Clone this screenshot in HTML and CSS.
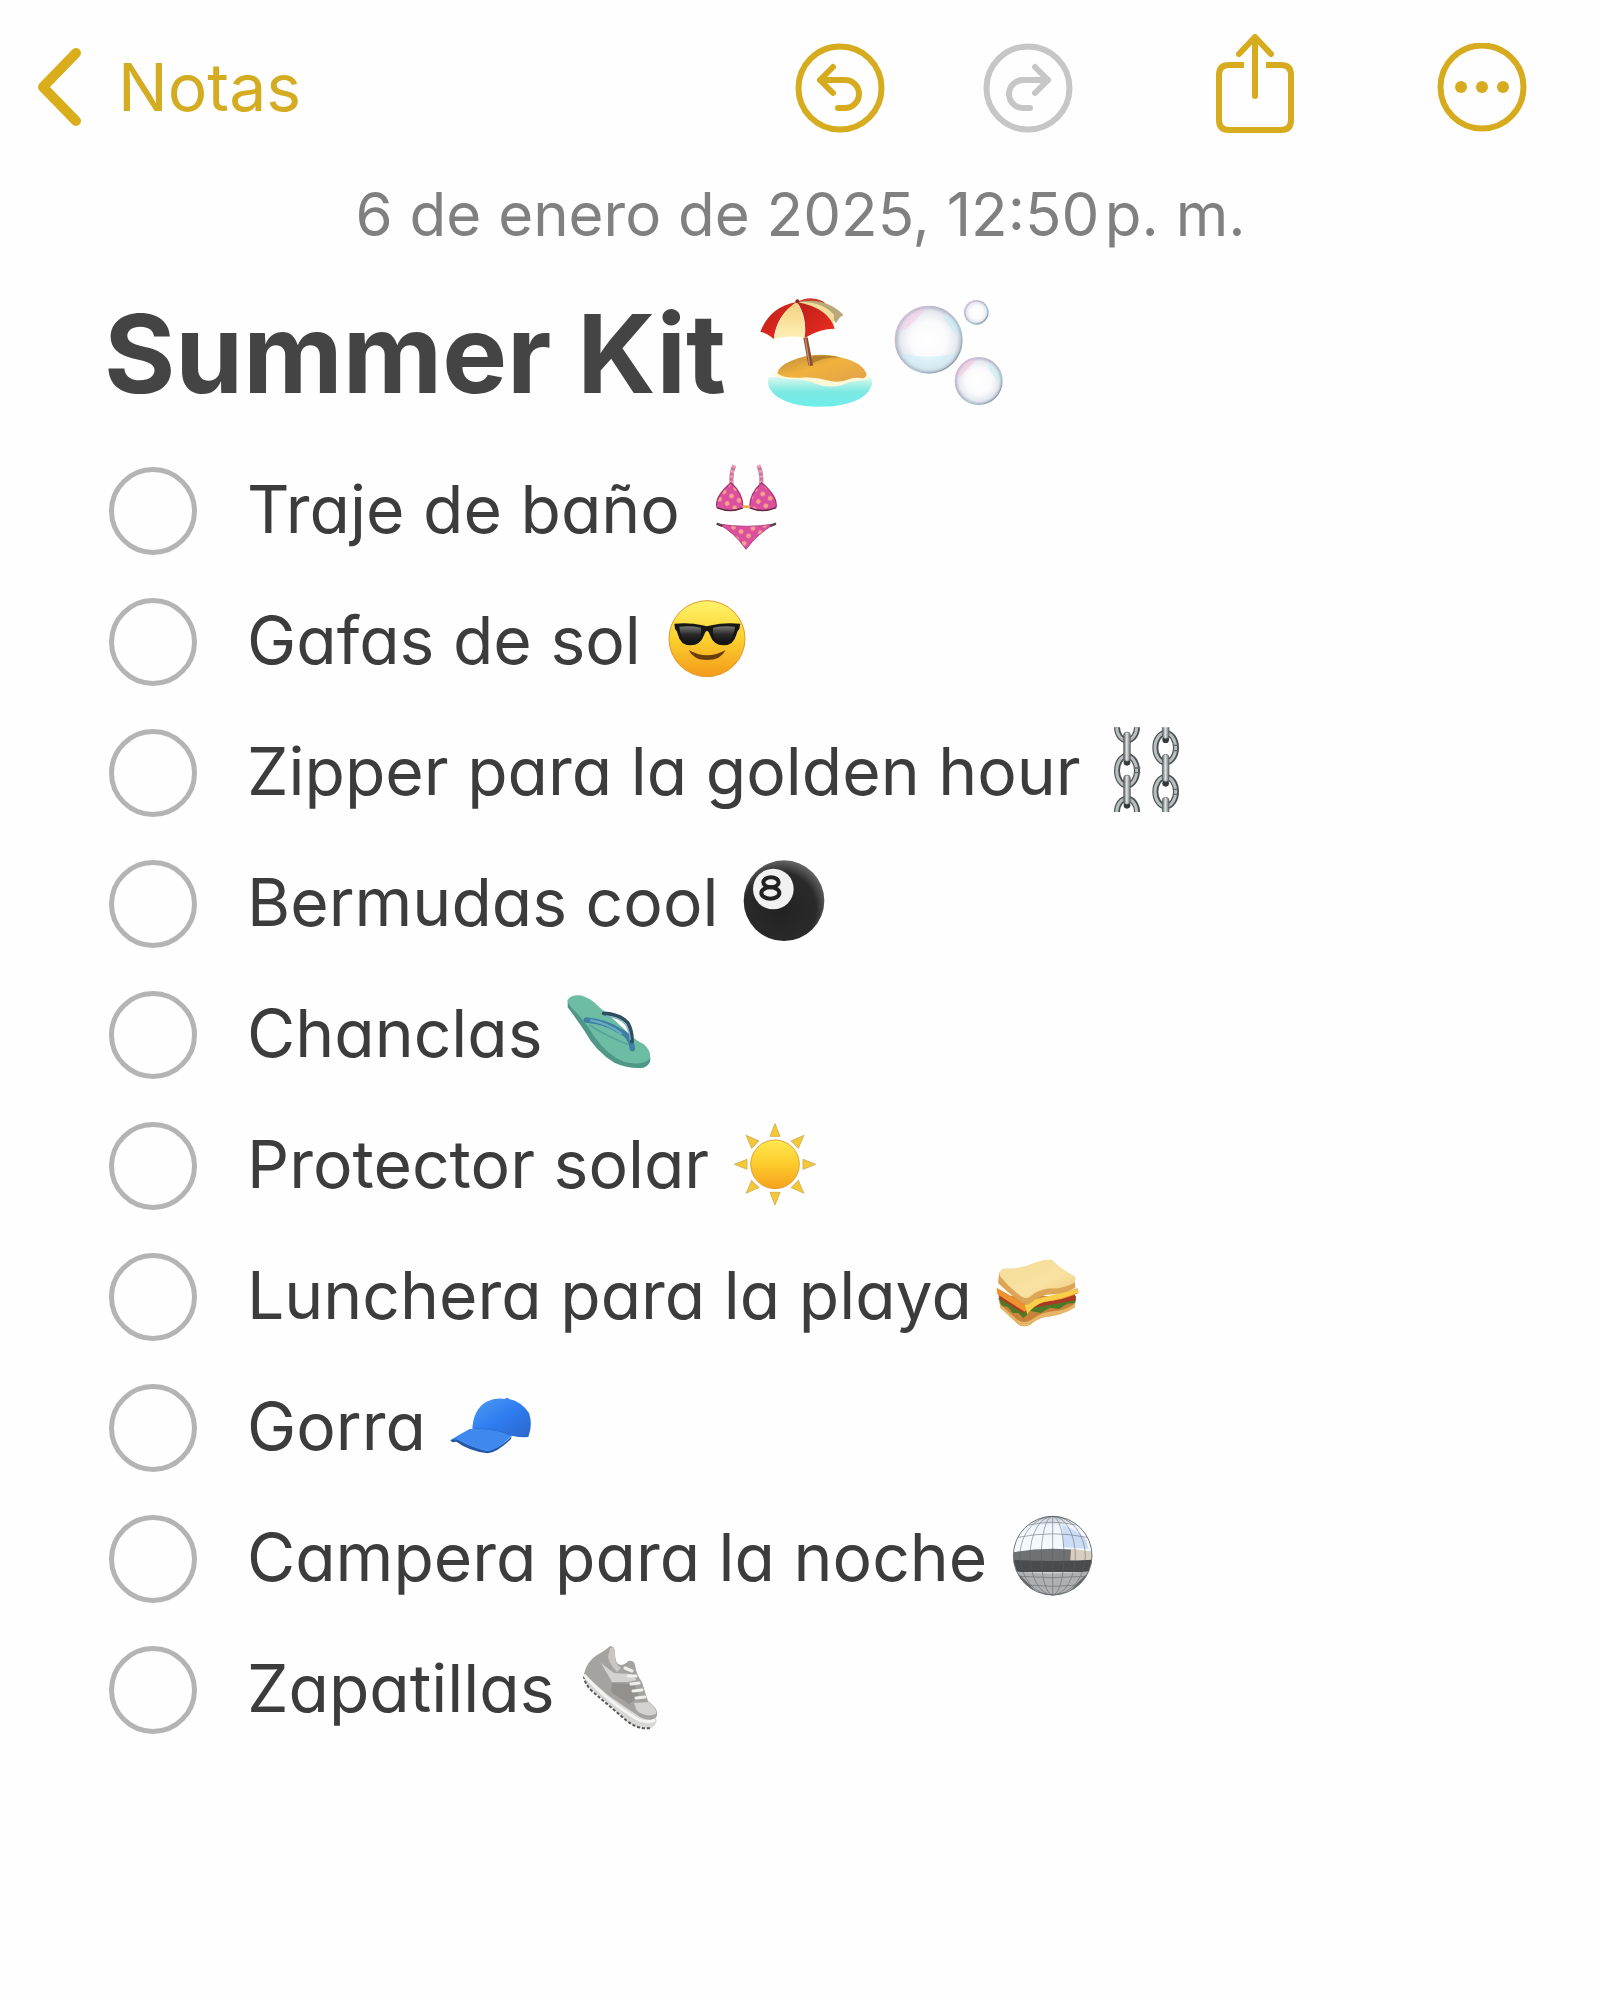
FILE: index.html
```html
<!DOCTYPE html>
<html lang="es">
<head>
    <meta charset="UTF-8">
    <meta name="viewport" content="width=device-width, initial-scale=1.0">
    <title>Summer Kit</title>
    <link rel="stylesheet" href="styles.css">
</head>
<body>
    <header class="toolbar">
        <a class="back" href="#">
            <svg class="chevron" viewBox="0 0 46 80"><path d="M40 6 L7 40 L40 74"/></svg>
            Notas
        </a>
        <div class="actions">
            <div class="history">
                <button type="button" class="icon-button" aria-label="Deshacer">
                    <svg width="90" height="90" viewBox="0 0 90 90">
                        <circle cx="45" cy="45" r="41.5"/>
                        <path d="M38 24 L25 37 L38 50 M25 37 H50 A14 14 0 0 1 50 65 H43"/>
                    </svg>
                </button>
                <button type="button" class="icon-button" aria-label="Rehacer" disabled>
                    <svg width="90" height="90" viewBox="0 0 90 90">
                        <circle cx="45" cy="45" r="41.5"/>
                        <path d="M52 24 L65 37 L52 50 M65 37 H40 A14 14 0 0 0 40 65 H47"/>
                    </svg>
                </button>
            </div>
            <button type="button" class="icon-button" aria-label="Compartir">
                <svg width="78" height="99" viewBox="0 0 78 99">
                    <path stroke-linecap="butt" d="M28 31 H13 Q3 31 3 41 V86 Q3 96 13 96 H65 Q75 96 75 86 V41 Q75 31 65 31 H50"/>
                    <path d="M39 62 V4 M23 20 L39 3 L55 20"/>
                </svg>
            </button>
            <button type="button" class="icon-button" aria-label="Más">
                <svg width="90" height="90" viewBox="0 0 90 90">
                    <circle cx="45" cy="44" r="41.5"/>
                    <g class="dots"><circle cx="24" cy="44" r="6"/><circle cx="45" cy="44" r="6"/><circle cx="66" cy="44" r="6"/></g>
                </svg>
            </button>
        </div>
    </header>

    <main class="note">
        <p class="date">6 de enero de 2025, 12:50&hairsp;p. m.</p>
        <h1 class="title">
            Summer Kit
            <!-- beach with umbrella -->
            <svg class="emoji" viewBox="50 48 342 342">
                <defs>
                    <linearGradient id="sea" x1="0" y1="0" x2="0" y2="1"><stop offset="0" stop-color="#d8f8ee"/><stop offset=".5" stop-color="#7be9e2"/><stop offset="1" stop-color="#6eeeea"/></linearGradient>
                    <linearGradient id="sand" x1="0" y1="0" x2="1" y2="1"><stop offset="0" stop-color="#b98a3e"/><stop offset=".45" stop-color="#f0b23c"/><stop offset="1" stop-color="#e2a24a"/></linearGradient>
                    <linearGradient id="cream" x1="0" y1="0" x2="0" y2="1"><stop offset="0" stop-color="#f3d27e"/><stop offset="1" stop-color="#fff0b8"/></linearGradient>
                    <linearGradient id="red" x1="0" y1="0" x2="1" y2="1"><stop offset="0" stop-color="#b92018"/><stop offset="1" stop-color="#f02c22"/></linearGradient>
                </defs>
                <path fill="url(#sea)" d="M82 292 Q72 325 110 352 Q155 382 235 380 Q320 380 365 350 Q402 322 388 292 Z"/>
                <path fill="#fdf8d8" d="M88 280 Q105 296 150 298 Q200 298 225 312 Q262 326 305 314 Q335 300 380 300 Q388 290 370 276 Z"/>
                <path fill="url(#sand)" d="M108 280 Q112 258 150 242 Q205 218 265 226 Q345 238 368 268 Q384 290 366 295 Q345 290 325 297 Q300 308 270 304 Q235 294 195 292 Q130 298 108 280 Z"/>
                <path fill="#87591c" opacity=".5" d="M205 256 Q240 230 300 232 Q260 224 215 228 Z"/>
                <path fill="#8b4b30" d="M186 174 L199 172 L215 256 Q208 260 201 256 Z"/>
                <path fill="#c89068" d="M190 176 L194 175 L207 257 L203 257 Z"/>
                <path fill="#c93a2c" d="M167 66 Q205 44 245 64 L262 80 Z"/>
                <path fill="#b9a878" d="M170 66 Q255 50 307 106 Q296 108 284 130 Q262 90 170 66 Z"/>
                <path fill="#f4dc9a" d="M170 66 Q240 62 278 104 L276 138 Q246 90 170 66 Z"/>
                <path fill="url(#red)" d="M167 66 Q85 80 57 156 Q78 158 97 178 Q105 105 167 66 Z"/>
                <path fill="url(#cream)" d="M167 66 Q110 100 97 178 Q145 164 190 174 Q195 110 167 66 Z"/>
                <path fill="url(#red)" d="M167 66 Q198 110 190 174 Q235 146 280 146 Q262 84 167 66 Z"/>
                <circle cx="168" cy="64" r="6" fill="#8c2a1c"/>
            </svg>
            <!-- bubbles -->
            <svg class="emoji" viewBox="447 48 342 342">
                <defs>
                    <radialGradient id="film"><stop offset="0" stop-color="#fff"/><stop offset=".55" stop-color="#fbfbfd"/><stop offset=".85" stop-color="#e6e9ef"/><stop offset="1" stop-color="#b4bac8"/></radialGradient>
                    <linearGradient id="rim" x1="0" y1="0" x2="1" y2="1"><stop offset="0" stop-color="#ecbfe2"/><stop offset=".4" stop-color="#b6b4cb"/><stop offset=".65" stop-color="#a5cbd6"/><stop offset="1" stop-color="#7c8191"/></linearGradient>
                </defs>
                <g fill="url(#film)" stroke="url(#rim)" stroke-width="4">
                    <circle cx="557" cy="179" r="100"/>
                    <circle cx="707" cy="303" r="70"/>
                    <circle cx="700" cy="97" r="35"/>
                </g>
                <path fill="#f5cfea" opacity=".6" d="M468 152 Q490 92 550 86 Q520 120 490 146 Z"/>
                <path fill="#c3edf5" opacity=".5" d="M470 220 Q555 240 640 218 Q618 270 558 273 Q495 268 470 220 Z M610 100 Q650 130 650 175 Q625 150 600 112 Z"/>
                <path fill="#f7c6dc" opacity=".6" d="M645 280 Q662 240 700 238 Q680 262 650 292 Z"/>
                <path fill="#c6f0f2" opacity=".6" d="M745 250 Q774 280 770 315 Q755 290 735 262 Z"/>
            </svg>
        </h1>

        <ul class="checklist">
            <li class="item">
                <input type="checkbox" id="traje">
                <label for="traje">Traje de baño</label>
                <svg class="emoji" viewBox="183 48 252 252">
                    <defs>
                        <pattern id="dots" width="26" height="26" patternUnits="userSpaceOnUse" patternTransform="rotate(30)"><rect width="26" height="26" fill="#dc4f9f"/><circle cx="13" cy="13" r="7" fill="#f8a48c"/></pattern>
                    </defs>
                    <path fill="none" stroke="#c27896" stroke-width="12" d="M274 46 Q262 70 266 104 M346 46 Q358 70 354 104"/>
                    <path fill="none" stroke="#f0a0bc" stroke-width="12" stroke-dasharray="7 9" d="M274 46 Q262 70 266 104 M346 46 Q358 70 354 104"/>
                    <path fill="url(#dots)" stroke="#a53672" stroke-width="4" d="M264 98 Q300 130 300 172 Q262 190 222 172 Q214 140 264 98 Z M356 98 Q320 130 320 172 Q358 190 399 172 Q405 140 356 98 Z"/>
                    <path fill="none" stroke="#5d2941" stroke-width="4" d="M223 174 Q262 190 300 174 M320 174 Q358 190 398 174"/>
                    <path stroke="#eeaa58" stroke-width="8" d="M298 170 H322"/>
                    <path fill="url(#dots)" stroke="#b5427f" stroke-width="3" d="M226 222 Q310 236 394 222 Q345 250 309 298 Q272 245 226 222 Z"/>
                    <path stroke="#4d4247" stroke-width="7" d="M221 221 L238 228 M399 221 L382 228"/>
                </svg>
            </li>
            <li class="item">
                <input type="checkbox" id="gafas">
                <label for="gafas">Gafas de sol</label>
                <svg class="emoji" viewBox="72 441 252 252">
                    <defs>
                        <linearGradient id="face" x1="0" y1="0" x2="0" y2="1"><stop offset="0" stop-color="#fff36b"/><stop offset=".5" stop-color="#fbd02e"/><stop offset="1" stop-color="#f59a1b"/></linearGradient>
                        <linearGradient id="lens" x1="0" y1="0" x2="0" y2="1"><stop offset="0" stop-color="#777"/><stop offset=".5" stop-color="#292929"/><stop offset="1" stop-color="#111"/></linearGradient>
                    </defs>
                    <circle cx="198" cy="566" r="114" fill="url(#face)" stroke="#e0982a" stroke-width="3"/>
                    <path fill="#171614" d="M100 521 Q150 517 184 526 Q198 531 212 526 Q246 517 298 521 L295 537 Q289 541 286 554 Q278 586 247 586 Q218 586 207 556 Q203 543 198 543 Q193 543 189 556 Q178 586 149 586 Q118 586 111 554 Q108 541 102 537 Z"/>
                    <path fill="url(#lens)" d="M115 530 Q150 526 180 533 Q183 579 149 579 Q120 578 115 530 Z M282 530 Q246 526 216 533 Q213 579 247 579 Q276 578 282 530 Z"/>
                    <path fill="#6a3d0d" d="M143 600 Q198 632 254 600 Q240 630 198 630 Q157 630 143 600 Z"/>
                </svg>
            </li>
            <li class="item">
                <input type="checkbox" id="zipper">
                <label for="zipper">Zipper para la golden hour</label>
                <svg class="emoji" viewBox="84 54 252 252">
                    <defs>
                        <linearGradient id="steel"><stop offset="0" stop-color="#4f5456"/><stop offset=".45" stop-color="#e4e8e9"/><stop offset="1" stop-color="#62686a"/></linearGradient>
                        <clipPath id="chain-box"><rect x="100" y="52" width="220" height="254"/></clipPath>
                    </defs>
                    <g clip-path="url(#chain-box)">
                        <g fill="none" stroke="#4c5153" stroke-width="18">
                            <ellipse cx="150" cy="51" rx="30" ry="40"/><ellipse cx="150" cy="182" rx="30" ry="44"/><ellipse cx="150" cy="306" rx="30" ry="40"/>
                            <ellipse cx="266" cy="113" rx="31" ry="44"/><ellipse cx="266" cy="245" rx="31" ry="44"/>
                        </g>
                        <g fill="none" stroke="#b9bfc0" stroke-width="9">
                            <ellipse cx="149" cy="51" rx="30" ry="40"/><ellipse cx="149" cy="182" rx="30" ry="44"/><ellipse cx="149" cy="306" rx="30" ry="40"/>
                            <ellipse cx="265" cy="113" rx="31" ry="44"/><ellipse cx="265" cy="245" rx="31" ry="44"/>
                        </g>
                        <g fill="#34383a"><circle cx="150" cy="157" r="10"/><circle cx="150" cy="286" r="10"/><circle cx="266" cy="89" r="10"/><circle cx="266" cy="220" r="10"/></g>
                        <g fill="url(#steel)" stroke="#5c6163" stroke-width="2">
                            <rect x="140" y="66" width="20" height="88" rx="10"/><rect x="140" y="195" width="20" height="88" rx="10"/>
                            <rect x="256" y="30" width="20" height="56" rx="10"/><rect x="256" y="133" width="20" height="82" rx="10"/><rect x="256" y="262" width="20" height="60" rx="10"/>
                        </g>
                        <path stroke="#626769" stroke-width="4" d="M172 174 H190 M172 188 H190 M288 106 H306 M288 122 H306 M288 238 H306 M288 253 H306"/>
                    </g>
                </svg>
            </li>
            <li class="item">
                <input type="checkbox" id="bermudas">
                <label for="bermudas">Bermudas cool</label>
                <svg class="emoji" viewBox="69 57 252 252">
                    <defs>
                        <radialGradient id="ball" cx=".45" cy=".6" r=".6"><stop offset="0" stop-color="#222"/><stop offset=".75" stop-color="#2a2a2a"/><stop offset="1" stop-color="#646464"/></radialGradient>
                    </defs>
                    <circle cx="195" cy="182" r="121" fill="url(#ball)"/>
                    <circle cx="163" cy="147" r="61" fill="#f1f1f1"/>
                    <g fill="none" stroke="#222" stroke-width="12"><ellipse cx="156" cy="127" rx="23" ry="15"/><ellipse cx="154" cy="159" rx="27" ry="17"/></g>
                </svg>
            </li>
            <li class="item">
                <input type="checkbox" id="chanclas">
                <label for="chanclas">Chanclas</label>
                <svg class="emoji" viewBox="48 60 252 252">
                    <path fill="#4f9786" d="M50 90 L50 112 Q75 145 100 182 Q135 245 190 278 Q235 298 278 293 Q300 285 298 262 Z"/>
                    <path fill="#6dbda4" d="M50 90 Q58 74 88 76 Q120 84 145 112 Q180 140 212 170 Q250 210 278 222 Q303 245 296 266 Q275 288 220 276 Q170 256 130 200 Q100 148 60 112 Q50 100 50 90 Z"/>
                    <path fill="none" stroke="#387f8a" stroke-width="5" opacity=".4" d="M115 165 Q170 200 232 224"/>
                    <path fill="none" stroke="#3f7ea6" stroke-width="16" stroke-linecap="round" d="M106 150 Q165 156 205 182 Q240 196 244 236"/>
                    <path fill="none" stroke="#66abc2" stroke-width="7" stroke-linecap="round" d="M120 151 Q170 160 210 190"/>
                    <path fill="none" stroke="#304e61" stroke-width="11" stroke-linecap="round" d="M158 130 Q205 132 230 158 Q244 182 243 215"/>
                    <path fill="none" stroke="#7eafb9" stroke-width="4" d="M165 138 Q208 142 224 164 Q236 184 238 210"/>
                </svg>
            </li>
            <li class="item">
                <input type="checkbox" id="protector">
                <label for="protector">Protector solar</label>
                <svg class="emoji" viewBox="48 33 252 252">
                    <defs>
                        <linearGradient id="sun" x1="0" y1="0" x2="0" y2="1"><stop offset="0" stop-color="#ffe94e"/><stop offset=".5" stop-color="#fccb2c"/><stop offset="1" stop-color="#f7a11c"/></linearGradient>
                        <path id="ray" fill="#f3c834" stroke="#d6b458" stroke-width="3" d="M174 41 L189 79 H159 Z"/>
                    </defs>
                    <use href="#ray"/><use href="#ray" transform="rotate(45 174 163)"/><use href="#ray" transform="rotate(90 174 163)"/><use href="#ray" transform="rotate(135 174 163)"/>
                    <use href="#ray" transform="rotate(180 174 163)"/><use href="#ray" transform="rotate(225 174 163)"/><use href="#ray" transform="rotate(270 174 163)"/><use href="#ray" transform="rotate(315 174 163)"/>
                    <circle cx="174" cy="163" r="73" fill="url(#sun)" stroke="#dfa43a" stroke-width="3"/>
                </svg>
            </li>
            <li class="item">
                <input type="checkbox" id="lunchera">
                <label for="lunchera">Lunchera para la playa</label>
                <svg class="emoji" viewBox="48 39 252 252">
                    <defs>
                        <linearGradient id="bread" x1="0" y1="0" x2="1" y2="1"><stop offset="0" stop-color="#f5dc98"/><stop offset=".6" stop-color="#f8e2a2"/><stop offset="1" stop-color="#edca7c"/></linearGradient>
                    </defs>
                    <path fill="#c8823a" d="M56 170 L60 200 L112 254 Q130 268 152 256 Q180 232 212 232 Q255 222 284 204 L284 172 Z"/>
                    <path fill="#e6b565" d="M60 196 L112 242 Q132 256 154 242 Q182 220 224 216 Q255 214 284 194 L284 206 Q255 224 214 232 Q180 232 152 256 Q130 268 112 254 L60 206 Z"/>
                    <path fill="#4c7a26" d="M54 176 L66 200 L84 204 L98 222 L116 222 L130 238 L152 216 L182 222 L210 206 L236 210 L262 194 L286 192 L288 170 L130 196 Z"/>
                    <path fill="#a93b25" d="M54 162 L60 180 L128 222 L160 206 L288 184 L284 164 L130 190 Z"/>
                    <path fill="#f0912f" d="M50 146 L52 166 L134 218 Q158 190 196 188 Q250 184 296 162 L292 148 L136 196 Z"/>
                    <path fill="#fbcf48" d="M134 198 L142 226 Q160 200 190 190 Q250 180 296 160 L290 150 L160 182 Z"/>
                    <path fill="#dda656" d="M58 100 L54 132 Q90 168 128 192 Q142 202 152 192 Q182 166 218 166 Q256 164 286 146 L284 122 Z"/>
                    <path fill="url(#bread)" d="M60 98 Q64 88 84 88 Q122 90 162 72 Q195 60 216 62 Q238 86 284 112 Q292 126 276 134 Q246 150 212 148 Q178 150 154 170 Q142 182 126 174 Q88 146 62 114 Q56 106 60 98 Z"/>
                </svg>
            </li>
            <li class="item">
                <input type="checkbox" id="gorra">
                <label for="gorra">Gorra</label>
                <svg class="emoji" viewBox="63 12 252 252">
                    <defs>
                        <linearGradient id="crown" x1="0" y1="0" x2="1" y2="1"><stop offset="0" stop-color="#4f9bf3"/><stop offset=".5" stop-color="#2f7df0"/><stop offset="1" stop-color="#2a66cb"/></linearGradient>
                    </defs>
                    <path fill="#2458a6" d="M64 184 Q70 178 84 180 Q130 206 176 216 Q215 205 248 172 L246 180 Q205 220 176 223 Q120 216 82 188 L70 190 Z"/>
                    <path fill="url(#crown)" d="M130 148 Q134 90 172 68 Q200 55 228 60 Q234 52 240 60 Q278 68 300 102 Q312 138 298 174 Q275 176 248 170 Q200 170 130 148 Z"/>
                    <path fill="#3e88ee" d="M66 182 Q96 164 122 150 Q190 146 248 170 Q212 208 176 217 Q126 206 84 181 Z"/>
                    <path fill="none" stroke="#286bd4" stroke-width="2" d="M130 148 Q195 146 248 170"/>
                </svg>
            </li>
            <li class="item">
                <input type="checkbox" id="campera">
                <label for="campera">Campera para la noche</label>
                <svg class="emoji" viewBox="36 45 252 252">
                    <defs>
                        <linearGradient id="mirror" x1="0" y1="0" x2="0" y2="1"><stop offset="0" stop-color="#bfc5cd"/><stop offset=".25" stop-color="#f0f5fb"/><stop offset="1" stop-color="#f6fbff"/></linearGradient>
                        <clipPath id="disco"><circle cx="161" cy="170" r="118"/></clipPath>
                    </defs>
                    <g clip-path="url(#disco)">
                        <path fill="url(#mirror)" d="M40 50 H282 V172 H40 Z"/>
                        <path fill="#cbdcf4" d="M190 78 Q240 95 262 122 L268 150 L192 144 Z"/>
                        <path fill="#6f7172" d="M40 160 Q161 138 282 160 V200 H40 Z"/>
                        <path fill="#d8cdbf" d="M216 149 L282 158 V190 L214 184 Z"/>
                        <path fill="#4a4b4c" d="M40 182 Q161 190 282 182 V220 H40 Z"/>
                        <path fill="#aeb0b1" d="M40 216 Q161 230 282 216 V290 H40 Z"/>
                        <path fill="#66686a" d="M40 210 Q90 250 120 290 H40 Z M282 210 Q232 250 202 290 H282 Z"/>
                    </g>
                    <circle cx="161" cy="170" r="118" fill="none" stroke="#737679" stroke-width="3"/>
                    <g fill="none" stroke="#565d65" stroke-width="2" opacity=".75">
                        <path d="M161 52 V288"/>
                        <ellipse cx="161" cy="170" rx="34" ry="118"/><ellipse cx="161" cy="170" rx="68" ry="118"/><ellipse cx="161" cy="170" rx="98" ry="118"/>
                        <path d="M90 78 Q161 62 232 78 M58 115 Q161 94 264 115 M62 232 Q161 240 260 232 M84 258 Q161 266 238 258"/>
                    </g>
                </svg>
            </li>
            <li class="item">
                <input type="checkbox" id="zapatillas">
                <label for="zapatillas">Zapatillas</label>
                <svg class="emoji" viewBox="0 0 84 84">
                    <path fill="#d8d8d6" d="M5 29 Q3 36 12 44 L50 78 Q62 86 72 83 Q79 80 77 72 Z"/>
                    <path fill="none" stroke="#555" stroke-width="2" stroke-dasharray="3 2" d="M5 31 Q5 38 13 46 L48 76 Q60 85 71 83"/>
                    <path fill="#a5a3a0" d="M5 29 Q8 16 18 10 Q27 5 31 1 Q36 1 36 8 Q36 20 42 20 Q47 19 49 16 Q55 15 56 20 Q57 29 63 37 Q66 47 69 56 Q80 64 78 71 Q73 78 61 72 Q43 60 29 50 Q15 38 5 29 Z"/>
                    <path fill="#d4d2cf" d="M22 18 L35 28 L52 29 L58 35 L49 37 L33 37 Z M55 58 L70 57 Q79 65 77 69 Q68 73 58 66 Z"/>
                    <path fill="#c9c7c4" d="M31 3 Q36 1 36 8 Q35 19 42 23 L38 27 Q31 20 29 12 Z"/>
                    <path fill="#94918d" d="M33 38 L55 39 L60 52 L50 59 L32 47 Z"/>
                    <path fill="none" stroke="#f4f4f2" stroke-width="3" d="M5 30 Q28 56 58 74 Q68 79 76 75"/>
                    <path fill="none" stroke="#efefec" stroke-width="3" stroke-linecap="round" d="M46 23 L53 26 M49 31 L57 31 M52 39 L60 38 M54 46 L63 45 M57 53 L66 52"/>
                </svg>
            </li>
        </ul>
    </main>
</body>
</html>
```

FILE: styles.css
```css
body {
    margin: 0;
    background-color: #fefefe;
    color: #3c3c3c;
    font-family: Inter, "Liberation Sans", sans-serif;
}
.toolbar {
    display: flex;
    align-items: flex-end;
    justify-content: space-between;
    padding: 34px 74px 0 36px;
}
.back {
    display: flex;
    align-items: center;
    gap: 36px;
    color: #d4ac22;
    font-size: 66px;
    line-height: 92px;
    text-decoration: none;
}
.chevron {
    width: 46px;
    height: 80px;
    fill: none;
    stroke: #d9ae1a;
    stroke-width: 10;
    stroke-linecap: round;
    stroke-linejoin: round;
}
.actions {
    display: flex;
    align-items: flex-end;
    gap: 143px;
}
.history {
    display: flex;
    gap: 98px;
}
.icon-button {
    padding: 0;
    border: none;
    background: none;
    color: #d6ac1e;
    cursor: pointer;
}
.icon-button:disabled {
    color: #c6c6c6;
    cursor: default;
}
.icon-button svg {
    display: block;
    fill: none;
    stroke: currentColor;
    stroke-width: 6;
    stroke-linecap: round;
    stroke-linejoin: round;
}
.icon-button .dots {
    fill: currentColor;
    stroke: none;
}
.note {
    padding: 40px 104px 120px;
}
.date {
    margin: 0 0 32px;
    color: #808080;
    font-size: 60px;
    line-height: 82px;
    text-align: center;
}
.title {
    display: flex;
    align-items: center;
    gap: 20px;
    margin: 0 0 26px;
    color: #444;
    font-size: 109px;
    font-weight: 700;
    line-height: 132px;
}
.emoji {
    flex: none;
    overflow: visible;
}
.title .emoji {
    width: 114px;
    height: 114px;
}
.title .emoji:first-of-type {
    margin-left: 12px;
}
.checklist {
    margin: 0;
    padding: 0;
    list-style: none;
}
.item {
    display: flex;
    align-items: center;
    height: 131px;
    font-size: 66px;
    line-height: 80px;
    font-feature-settings: "cv11"; /* round a */
}
.item input {
    appearance: none;
    flex: none;
    width: 88px;
    height: 88px;
    margin: 0 50px 0 5px;
    border: 5px solid #b4b4b4;
    border-radius: 50%;
}
.item input:checked {
    background-color: #d6ac1e;
}
.item label {
    padding-bottom: 4px;
}
.item .emoji {
    width: 84px;
    height: 84px;
    margin: 0 0 6px 24px;
}
```
